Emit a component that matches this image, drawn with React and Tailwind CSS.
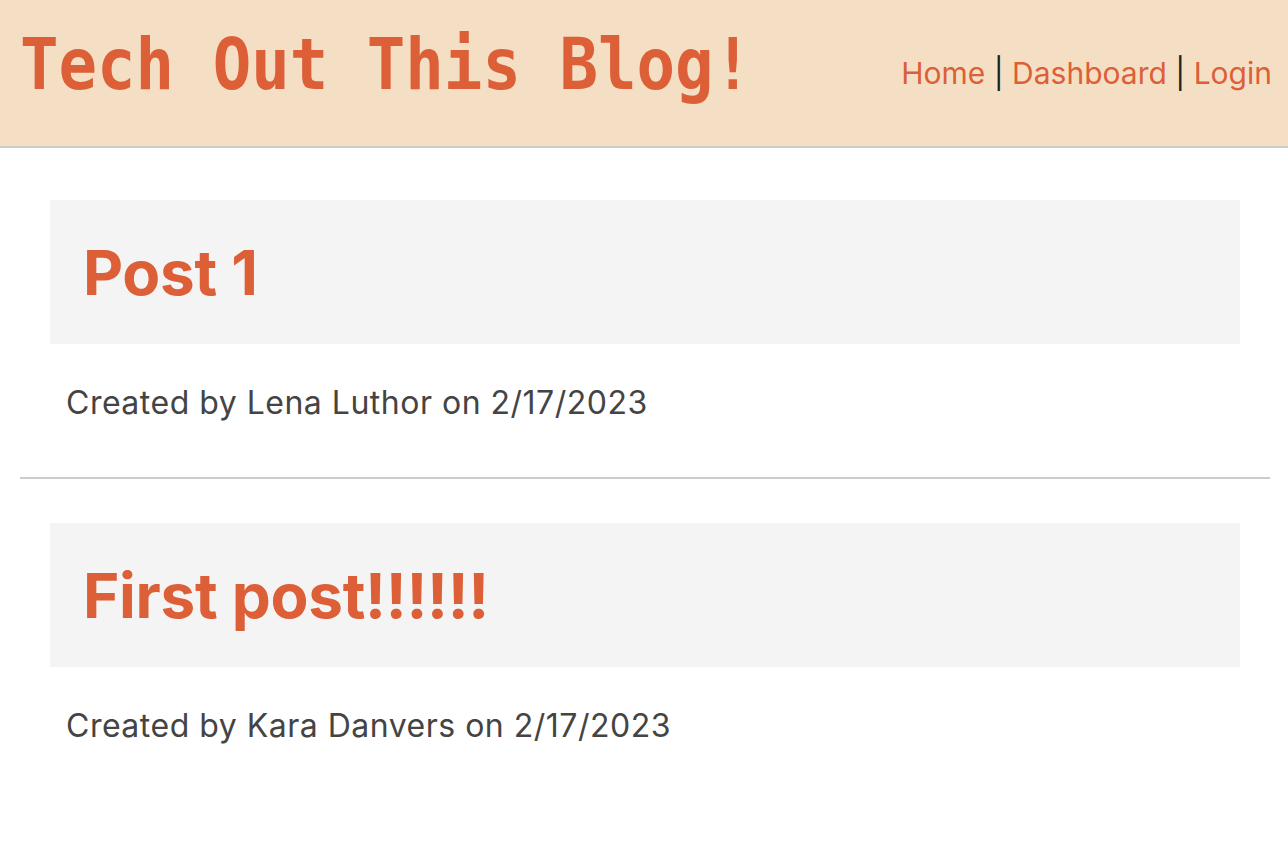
import React from "react";

function Post({ title, meta }) {
  return (
    <article className="mx-[30px]">
      <div className="h-[144px] bg-[#f4f4f4] flex items-center pl-[33px]">
        <h2 className="text-[62px] font-bold leading-none text-[#dc5f38] tracking-[-0.3px] mt-[2px]" style={{ fontFamily: "Inter, sans-serif" }}>
          {title}
        </h2>
      </div>
      <p className="pl-[16px] mt-[35px] text-[32px] leading-[48px] text-[#444444] tracking-[0.5px]" style={{ fontFamily: "Inter, sans-serif" }}>
        {meta}
      </p>
    </article>
  );
}

export default function App() {
  return (
    <div className="min-h-[866px] bg-white">
      <header className="h-[148px] bg-[#f4dfc4] border-b-2 border-[#cccccc] flex items-start justify-between pl-[20px] pr-[16px]">
        <h1
          className="mt-[20px] text-[64px] leading-[80px] text-[#dc5f38] font-bold origin-top scale-y-[1.12]"
          style={{ fontFamily: "'DejaVu Sans Mono', monospace" }}
        >
          Tech Out This Blog!
        </h1>
        <nav className="mt-[53px] text-[30px] leading-[40px] text-[#222]" style={{ fontFamily: "Inter, sans-serif" }}>
          <a className="text-[#dc5f38]">Home</a> | <a className="text-[#dc5f38]">Dashboard</a> | <a className="text-[#dc5f38]">Login</a>
        </nav>
      </header>
      <main className="pl-[20px] pr-[18px] pt-[52px]">
        <Post title="Post 1" meta="Created by Lena Luthor on 2/17/2023" />
        <hr className="mt-[50px] mb-[44px] border-0 h-[2px] bg-[#cccccc]" />
        <Post title="First post!!!!!!" meta="Created by Kara Danvers on 2/17/2023" />
      </main>
    </div>
  );
}
